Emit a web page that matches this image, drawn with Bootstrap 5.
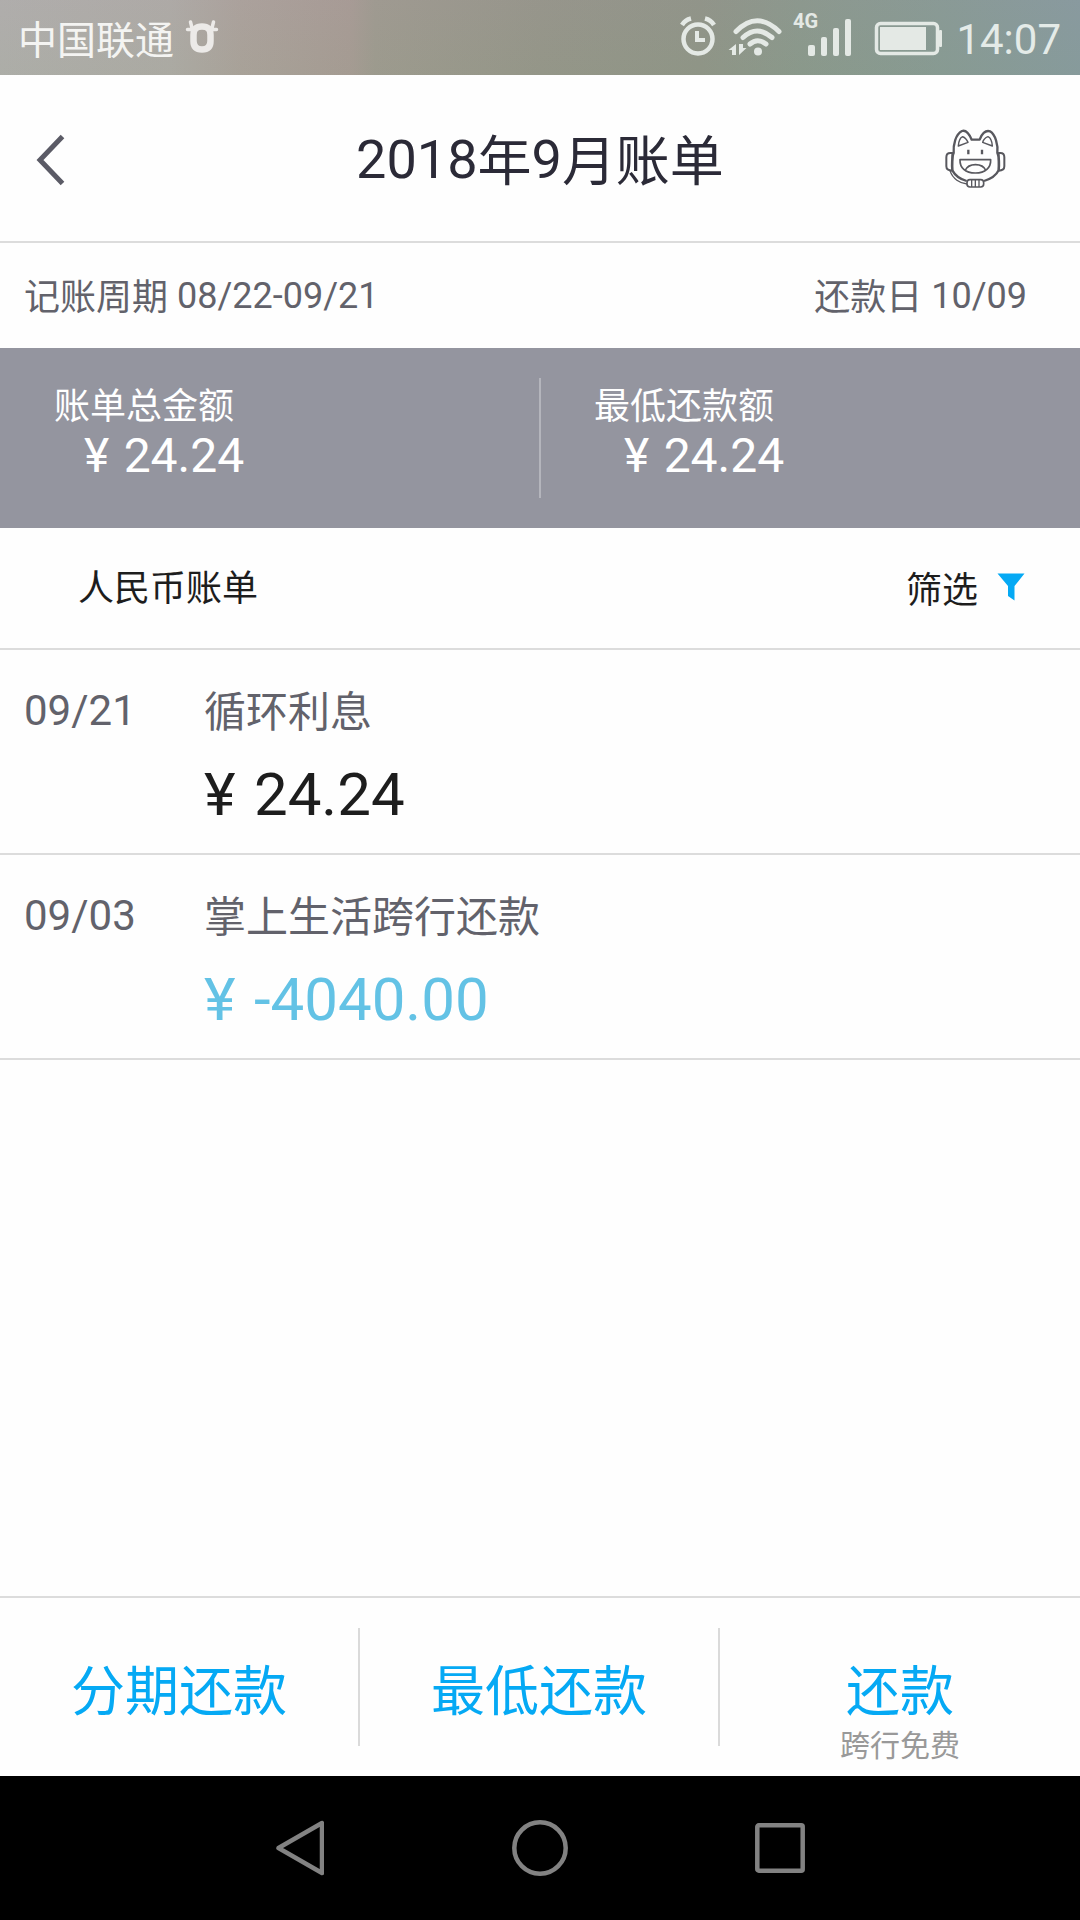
<!DOCTYPE html>
<html lang="zh-CN">
<head>
<meta charset="utf-8">
<meta name="viewport" content="width=device-width, initial-scale=1">
<title>2018年9月账单</title>
<link href="https://cdn.jsdelivr.net/npm/bootstrap@5.3.0/dist/css/bootstrap.min.css" rel="stylesheet">
<style>
  body { font-family: Roboto, "Noto Sans CJK SC", sans-serif; background: #fefefe; color: #1d1d1d; }
  svg { display: block; flex: none; }
  .screen { width: 1080px; height: 1920px; overflow: hidden; }
  .status { height: 75px; padding: 4px 19px 0 18px; color: #f4f4f2;
    background: linear-gradient(180deg, rgba(170,140,145,.08), rgba(140,150,110,.1)),
      linear-gradient(90deg, #b0b0ae 0, #aeaca8 170px, #aba39d 240px, #a79c96 350px, #9e9b91 375px, #95968b 540px, #8f9589 700px, #8a998e 800px, #879b96 940px, #869ba0 1080px); }
  .carrier { font-size: 39px; line-height: 60px; padding-top: 2px; }
  .clock { font-size: 42px; line-height: 60px; color: #e4ebe8; }
  .title-bar { height: 168px; border-bottom: 2px solid #dcdcdc; padding: 0 50px 0 35px; }
  .title-text { font-size: 54px; line-height: 80px; font-weight: 400; color: #2b2a37; padding: 3px 0 0 11px; }
  .title-text span { vertical-align: -3px; line-height: 1; }
  .period { height: 105px; padding: 0 53px 0 24px; font-size: 36px; color: #62626b; }
  .period .han { vertical-align: -1.5px; line-height: 1; }
  .totals { height: 180px; background: #94959f; color: #fff; }
  .total-cell { padding: 33px 0 0 54px; line-height: 50px; }
  .total-label { font-size: 36px; padding-top: 1px; margin-bottom: -1px; }
  .total-sum { font-size: 48px; padding-left: 30px; word-spacing: 2.5px; }
  .total-rule { width: 2px; height: 120px; background: #b4b5bc; margin-left: -1px; margin-right: -1px; }
  .filter-row { height: 122px; border-bottom: 2px solid #dcdcdc; padding: 2px 55px 0 78px; font-size: 36px; }
  .filter-btn { gap: 19px; padding-top: 4px; }
  .entry { height: 205px; border-bottom: 2px solid #dcdcdc; padding: 31px 24px 0; }
  .entry-date { width: 180px; }
  .entry-line { font-size: 42px; line-height: 60px; color: #62626b; }
  .entry-name { padding-top: 2px; margin-bottom: -2px; }
  .entry-sum { font-size: 60px; line-height: 80px; margin-top: 14px; word-spacing: 3.5px; }
  .refund { color: #63c2e5; }
  .actions { height: 180px; border-top: 2px solid #dcdcdc; color: #05a9f4; }
  .action { width: 358px; padding-top: 65px; }
  .action-name { font-size: 54px; line-height: 60px; }
  .action-note { font-size: 30px; line-height: 30px; margin-top: 8px; color: #999; }
  .action-rule { width: 2px; height: 118px; margin-top: 30px; background: #dadada; }
  .sys-nav { height: 144px; background: #000; padding: 0 275px 0 276px; }
</style>
<script src="https://cdn.jsdelivr.net/npm/bootstrap@5.3.0/dist/js/bootstrap.bundle.min.js"></script>
</head>
<body>
<div class="screen d-flex flex-column">

  <div class="status d-flex align-items-center justify-content-between">
    <div class="d-flex align-items-center">
      <span class="carrier">中国联通</span>
      <svg class="ms-2 mb-1" width="40" height="38" viewBox="0 0 40 38" fill="none" stroke="#eceae8" stroke-linecap="round">
        <path d="M20 7.500C13.500 7.500 11.500 11 11.500 16V22C11.500 28 14.500 30.500 20 30.500S28.500 28 28.500 22V16C28.500 11 26.500 7.500 20 7.500Z" stroke-width="6.500"/>
        <path d="M8.500 3L10 9M31.500 3L30 9M5.500 10.500H11M34.500 10.500H29" stroke-width="3.500"/>
      </svg>
    </div>
    <div class="d-flex align-items-center">
      <svg width="276" height="75" viewBox="680 2 276 75" style="margin-top:-4px" fill="none" stroke="#e4e9e5">
        <g stroke-width="4.500">
          <circle cx="698" cy="41" r="14.500"/>
          <path d="M697 33V42H705" stroke-width="4"/>
          <path d="M682 27Q685 22 691 20.500M714 27Q711 22 705 20.500" stroke-width="4.500"/>
        </g>
        <g stroke-width="5" stroke-linecap="round">
          <path d="M736 33.500Q757 12 779 33.500M743 39.500Q757 26.500 772 39.500M750 46Q757.500 39.500 766 46"/>
        </g>
        <circle cx="758" cy="53.500" r="4" fill="#e4e9e5" stroke="none"/>
        <path d="M736 46V57H732V52H728.500ZM739 57V46H743V50H746.500Z" fill="#e4e9e5" stroke="none"/>
        <text x="793" y="30" font-family="Roboto" font-weight="700" font-size="20" fill="#e4e9e5" stroke="none">4G</text>
        <g fill="#e4e9e5" stroke="none">
          <rect x="808" y="47" width="7" height="11" rx="2"/><rect x="821" y="39" width="6" height="19" rx="2"/>
          <rect x="833" y="30" width="6" height="28" rx="2"/><rect x="845" y="21" width="6" height="37" rx="2"/>
          <rect x="880" y="29" width="46" height="23"/><rect x="939" y="32" width="3" height="17" rx="1"/>
        </g>
        <rect x="876.500" y="25.500" width="61" height="30" rx="4" stroke-width="3.500"/>
      </svg>
      <span class="clock">14:07</span>
    </div>
  </div>

  <header class="title-bar d-flex align-items-center justify-content-between">
    <svg class="mt-1" width="114" height="54" viewBox="0 0 114 54" fill="none" stroke="#5b5b66" stroke-width="5"><path d="M27.500 3.500L5 27L27.500 50.500"/></svg>
    <h1 class="title-text m-0">2018<span>年</span>9<span>月账单</span></h1>
    <svg class="mt-1" width="110" height="100" viewBox="0 0 330 300" fill="none" stroke="#58585e" stroke-width="7" stroke-linejoin="round">
      <path d="M101 130C99 103 107 73 126 63C139 59 149 75 155 89H179C184 73 196 59 210 64C226 74 235 104 232 130"/>
      <path d="M101 128C96 140 95 168 97 181C104 194 119 207 140 213M232 128C238 140 238 168 236 181C228 197 213 207 192 213"/>
      <path d="M97 129H91Q79 129 79 142V169Q79 182 97 182ZM236 129H241Q253 129 253 142V169Q253 182 236 182Z" stroke-width="6"/>
      <path d="M115 108C116 93 121 83 128 80C137 83 141 90 144 97ZM217 108C216 93 211 83 204 80C196 83 190 90 188 97Z" stroke-width="4.500"/>
      <path d="M145 119V133M186 119V133" stroke-width="7"/>
      <path d="M120 149H212C213 173 196 189 166 189S119 173 120 149ZM135 182C146 158 187 158 198 182" stroke-width="5"/>
      <path d="M90 182C98 207 120 220 141 222" stroke-width="4"/>
      <rect x="141" y="209" width="50" height="22" rx="9" stroke-width="5" fill="#fefefe"/><path d="M155 209V231M166 209V231M177 209V231" stroke-width="4"/>
    </svg>
  </header>

  <div class="period d-flex align-items-center justify-content-between">
    <div><span class="han">记账周期</span> 08/22-09/21</div>
    <div><span class="han">还款日</span> 10/09</div>
  </div>

  <section class="totals d-flex">
    <div class="total-cell w-50"><div class="total-label">账单总金额</div><div class="total-sum">¥ 24.24</div></div>
    <div class="total-rule align-self-center"></div>
    <div class="total-cell w-50"><div class="total-label">最低还款额</div><div class="total-sum">¥ 24.24</div></div>
  </section>

  <div class="filter-row d-flex align-items-center justify-content-between">
    <span>人民币账单</span>
    <div class="filter-btn d-flex align-items-center">
      <span>筛选</span>
      <svg class="mb-2" width="28" height="28" viewBox="0 0 28 28" fill="#05a9f4"><path d="M.500 .500H27.500L17.500 13V27.500L11 23V13Z"/></svg>
    </div>
  </div>

  <div class="entry d-flex">
    <div class="entry-date entry-line">09/21</div>
    <div><div class="entry-line entry-name">循环利息</div><div class="entry-sum">¥ 24.24</div></div>
  </div>
  <div class="entry d-flex">
    <div class="entry-date entry-line">09/03</div>
    <div><div class="entry-line entry-name">掌上生活跨行还款</div><div class="entry-sum refund">¥ -4040.00</div></div>
  </div>

  <footer class="mt-auto">
    <div class="actions d-flex text-center">
      <div class="action"><div class="action-name">分期还款</div></div>
      <div class="action-rule"></div>
      <div class="action"><div class="action-name">最低还款</div></div>
      <div class="action-rule"></div>
      <div class="action flex-fill"><div class="action-name">还款</div><div class="action-note">跨行免费</div></div>
    </div>
    <div class="sys-nav d-flex align-items-center justify-content-between">
      <svg width="48" height="56" viewBox="0 0 48 56" fill="none" stroke="#828282" stroke-width="4.500" stroke-linejoin="round"><path d="M2.500 28L46 3V53Z"/></svg>
      <svg width="56" height="56" viewBox="0 0 56 56" fill="none" stroke="#828282" stroke-width="4.500"><circle cx="28" cy="28" r="25.700"/></svg>
      <svg width="50" height="50" viewBox="0 0 50 50" fill="none" stroke="#828282" stroke-width="4.500"><rect x="2.300" y="2.300" width="45.400" height="45.400" rx="1.500"/></svg>
    </div>
  </footer>
</div>
</body>
</html>
